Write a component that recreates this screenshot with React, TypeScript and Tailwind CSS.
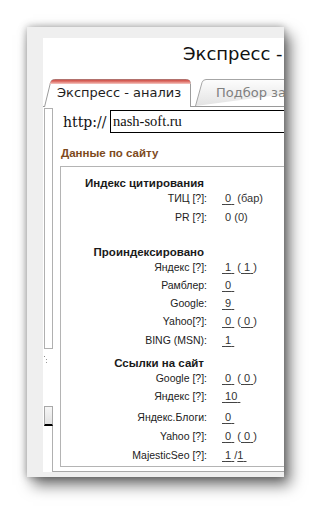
import React from "react";

const L = "font-['Liberation_Sans',Arial,sans-serif]";

function Val({ children }: { children: React.ReactNode }) {
  return <span className="underline decoration-[#444] underline-offset-[2px]">{children}</span>;
}

const NB = "\u00a0";

function Row({ label, h, mt, children }: { label: string; h: string; mt?: string; children: React.ReactNode }) {
  return (
    <div className={`flex items-center ${h} ${mt ?? ""}`}>
      <div className={`w-[146px] text-right text-[10.5px] leading-none text-[#222] ${L}`}>{label}</div>
      <div className={`pl-[15px] text-[11px] leading-none text-[#333] whitespace-nowrap ${L}`}>{children}</div>
    </div>
  );
}

function Head({ text, mt }: { text: string; mt?: string }) {
  return (
    <div className={`flex items-center h-[10px] ${mt ?? ""}`}>
      <div className={`w-[143px] text-right text-[11.5px] font-bold leading-none text-[#1a1a1a] whitespace-nowrap ${L}`}>{text}</div>
    </div>
  );
}

export default function App() {
  return (
    <div className="w-[309px] h-[510px] bg-white overflow-hidden">
      <div className="pt-[27px] pl-[27px]">
        <div className="w-[257px] h-[450px] bg-[#efefef] pl-[16px] pt-[11px] pb-[5px] flex flex-col shadow-[0_0_8px_rgba(0,0,0,0.35),6px_8px_14px_rgba(0,0,0,0.55)]">
          <div className="flex-1 bg-white overflow-hidden flex flex-col">
            {/* title */}
            <div className="h-[41px] pl-[140px] pt-[6px] shrink-0">
              <div className="text-[18px] leading-[20px] text-[#111] whitespace-nowrap font-['DejaVu_Sans',sans-serif]">
                Экспресс - анализ
              </div>
            </div>
            {/* tabs */}
            <div className="h-[27px] flex items-start shrink-0 pl-[1px] gap-[4px]">
              <div className="relative z-10 w-[147px] h-[28px] -mb-px flex items-center pb-[1px] shrink-0">
                <svg className="absolute inset-0" width="147" height="28" viewBox="0 0 147 28">
                  <defs>
                    <linearGradient id="rt" x1="0" y1="0" x2="0" y2="1">
                      <stop offset="0" stopColor="#c8463e" />
                      <stop offset="0.5" stopColor="#e0776f" />
                      <stop offset="1" stopColor="#f6c9c4" />
                    </linearGradient>
                  </defs>
                  <path d="M0.5,28 L6.5,3.5 Q7.3,0.5 10.5,0.5 L142.5,0.5 Q146.5,0.5 146.5,4.5 L146.5,28" fill="#fff" stroke="#9c9c9c" />
                  <path d="M5.4,5 L6.5,3.5 Q7.3,0.5 10.5,0.5 L142.5,0.5 Q146.5,0.5 146.5,4.5 L146.5,5 Z" fill="url(#rt)" />
                </svg>
                <span className="relative pl-[13px] text-[13px] leading-none text-[#1e1e1e] whitespace-nowrap font-['DejaVu_Sans',sans-serif]">
                  Экспресс - анализ
                </span>
              </div>
              <div className="relative w-[120px] h-[27px] flex items-center shrink-0">
                <svg className="absolute inset-0" width="120" height="27" viewBox="0 0 120 27">
                  <defs>
                    <linearGradient id="gt" x1="0" y1="0" x2="0" y2="1">
                      <stop offset="0" stopColor="#fdfdfd" />
                      <stop offset="1" stopColor="#e3e3e3" />
                    </linearGradient>
                  </defs>
                  <path d="M0.5,27 L7,3.5 Q8,0.5 11,0.5 L200,0.5" fill="url(#gt)" stroke="#a6a6a6" />
                </svg>
                <span className="relative pl-[21px] text-[13px] leading-none text-[#808080] whitespace-nowrap font-['DejaVu_Sans',sans-serif]">
                  Подбор запросов
                </span>
              </div>
            </div>
            {/* content */}
            <div className="flex-1 flex border-t border-[#9a9a9a]">
              {/* left strip */}
              <div className="w-[10px] shrink-0 flex flex-col">
                <div className="ml-[1px] mt-[1px] w-[9px] h-[241px] border border-[#b0b0b0] bg-white" />
                <div className="relative h-[57px]">
                  <span className="absolute left-[1px] top-[7px] w-[1px] h-[1px] bg-[#888]" />
                  <span className="absolute left-[3px] top-[10px] w-[1px] h-[1px] bg-[#999]" />
                  <span className="absolute left-[3px] top-[13px] w-[1px] h-[1px] bg-[#999]" />
                </div>
                <div className="ml-[1px] w-[9px] h-[20px] border border-[#a8a8a8] border-b-2 border-b-black bg-gradient-to-b from-[#f6f6f6] to-[#e2e2e2]" />
                <div className="flex-1 border-r border-[#b0b0b0]" />
              </div>
              {/* main */}
              <div className="flex-1 flex flex-col border-b border-[#a8a8a8]">
                <div className="mt-[3px] h-[23px] flex items-center shrink-0">
                  <div className="w-[57px] pl-[10px] text-[14px] leading-none text-[#111] font-['DejaVu_Serif',serif] whitespace-nowrap">
                    http://
                  </div>
                  <div className="w-[220px] h-[23px] border border-black flex items-center pl-[2px] text-[14.5px] leading-none text-[#111] font-['Liberation_Serif',serif]">
                    nash-soft.ru
                  </div>
                </div>
                <div className={`mt-[14px] h-[14px] flex items-center pl-[8px] text-[11.5px] font-bold text-[#7d4a1c] leading-none ${L}`}>
                  Данные по сайту
                </div>
                <div className="mt-[5px] ml-[7px] w-[260px] h-[301px] border border-[#b4b4b4] pt-[12px] flex flex-col">
                  <Head text="Индекс цитирования" />
                  <Row label="ТИЦ [?]:" h="h-[19px]">
                    <Val>{NB}0{NB}</Val> (бар)
                  </Row>
                  <Row label="PR [?]:" h="h-[19px]">
                    {NB}0 (0)
                  </Row>
                  <div className="h-[21px]" />
                  <Head text="Проиндексировано" />
                  <Row label="Яндекс [?]:" h="h-[18px]">
                    <Val>{NB}1{NB}</Val> (<Val>{NB}1{NB}</Val>)
                  </Row>
                  <Row label="Рамблер:" h="h-[18px]">
                    <Val>{NB}0{NB}</Val>
                  </Row>
                  <Row label="Google:" h="h-[18px]">
                    <Val>{NB}9{NB}</Val>
                  </Row>
                  <Row label="Yahoo[?]:" h="h-[19px]">
                    <Val>{NB}0{NB}</Val> (<Val>{NB}0{NB}</Val>)
                  </Row>
                  <Row label="BING (MSN):" h="h-[18px]">
                    <Val>{NB}1{NB}</Val>
                  </Row>
                  <Head text="Ссылки на сайт" mt="mt-[10px]" />
                  <Row label="Google [?]:" h="h-[18px]">
                    <Val>{NB}0{NB}</Val> (<Val>{NB}0{NB}</Val>)
                  </Row>
                  <Row label="Яндекс [?]:" h="h-[18px]">
                    <Val>{NB}10{NB}</Val>
                  </Row>
                  <Row label="Яндекс.Блоги:" h="h-[19px]" mt="mt-[3px]">
                    <Val>{NB}0{NB}</Val>
                  </Row>
                  <Row label="Yahoo [?]:" h="h-[19px]">
                    <Val>{NB}0{NB}</Val> (<Val>{NB}0{NB}</Val>)
                  </Row>
                  <Row label="MajesticSeo [?]:" h="h-[19px]">
                    <Val>{NB}1{NB}</Val>/<Val>1{NB}</Val>
                  </Row>
                </div>
              </div>
            </div>
          </div>
        </div>
      </div>
    </div>
  );
}
